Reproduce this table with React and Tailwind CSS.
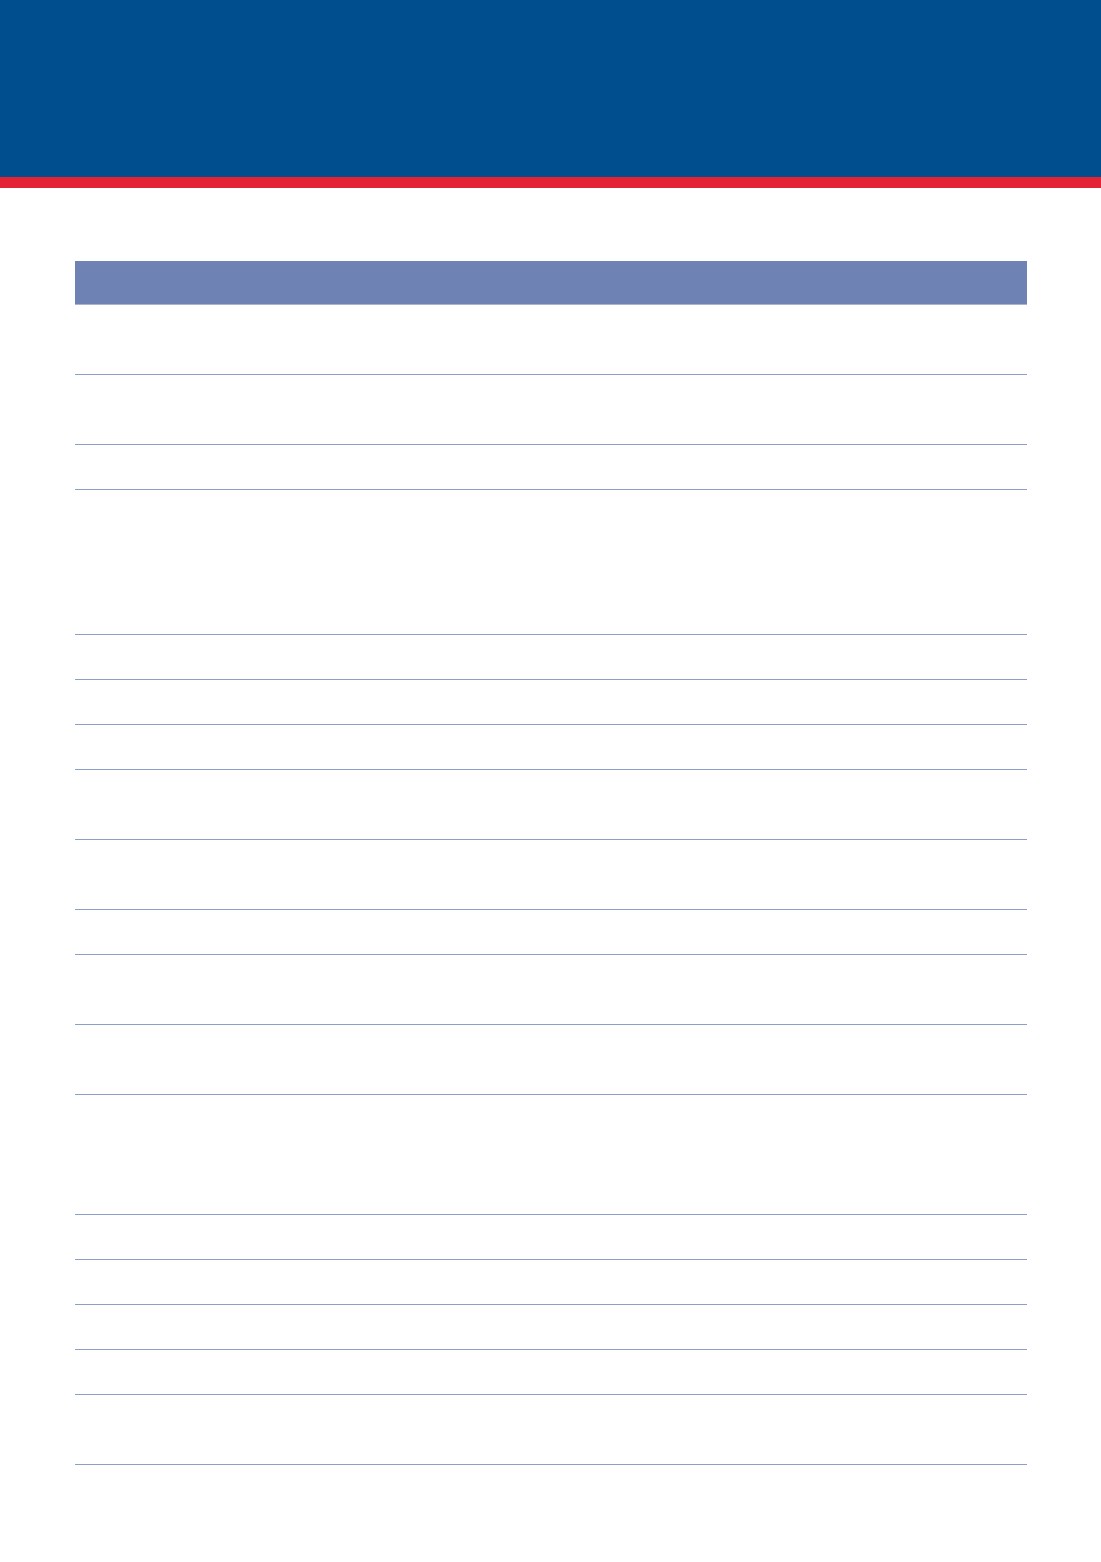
export default function App() {
  const rows = [70, 70, 45, 145, 45, 45, 45, 70, 70, 45, 70, 70, 120, 45, 45, 45, 45, 70];
  const hc = {
    45: "h-[45px]",
    70: "h-[70px]",
    120: "h-[120px]",
    145: "h-[145px]",
  };
  return (
    <div className="w-[1101px] h-[1562px] bg-white" style={{ fontFamily: '"Liberation Sans", Arial, sans-serif' }}>
      <div className="h-[177px] bg-[#004e8d]" />
      <div className="h-[11px] bg-[#e32235]" />
      <div className="pt-[73px] pl-[75px] pr-[74px]">
        <div className="h-[43px] bg-[#6e83b3]" />
        <div className="h-px bg-[#a6b3d4]" />
        {rows.map((h, i) => (
          <div key={i} className={`${hc[h]} border-b border-[#8e9fc7]`} />
        ))}
      </div>
    </div>
  );
}
